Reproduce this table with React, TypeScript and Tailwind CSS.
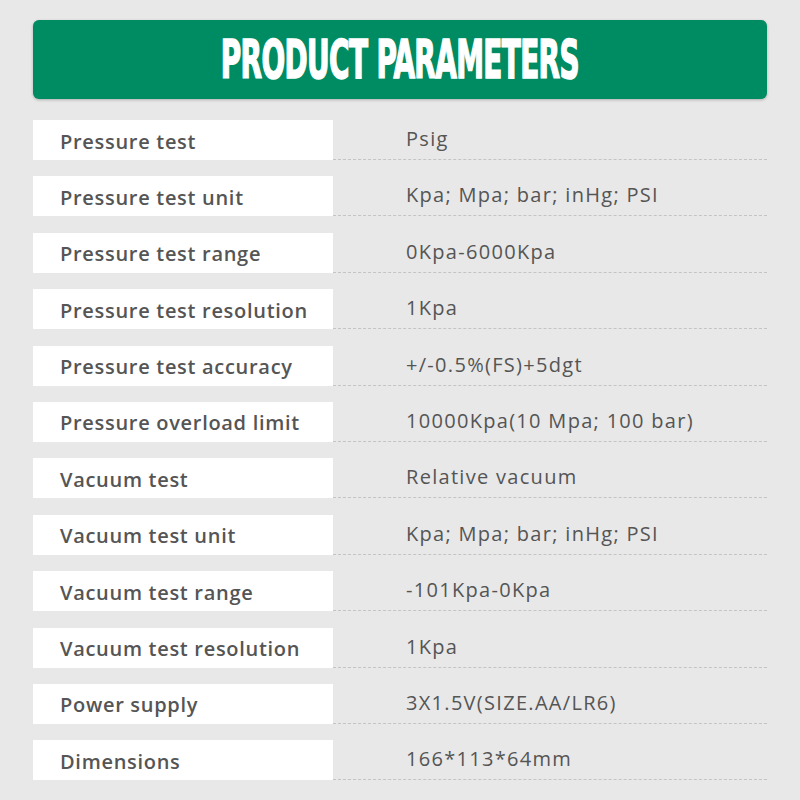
const rows: [string, string][] = [
  ['Pressure test', 'Psig'],
  ['Pressure test unit', 'Kpa; Mpa; bar; inHg; PSI'],
  ['Pressure test range', '0Kpa-6000Kpa'],
  ['Pressure test resolution', '1Kpa'],
  ['Pressure test accuracy', '+/-0.5%(FS)+5dgt'],
  ['Pressure overload limit', '10000Kpa(10 Mpa; 100 bar)'],
  ['Vacuum test', 'Relative vacuum'],
  ['Vacuum test unit', 'Kpa; Mpa; bar; inHg; PSI'],
  ['Vacuum test range', '-101Kpa-0Kpa'],
  ['Vacuum test resolution', '1Kpa'],
  ['Power supply', '3X1.5V(SIZE.AA/LR6)'],
  ['Dimensions', '166*113*64mm'],
]

export default function App() {
  return (
    <div className="w-[800px] h-[800px] bg-[#e8e8e8] pt-5 px-[33px] font-['Open_Sans',sans-serif] text-[#555]">
      {/* Header */}
      <div className="h-[79px] rounded-md bg-[#008c62] shadow-[0_1px_3px_rgba(0,0,0,0.25)] flex items-center justify-center">
        <h1 className="font-['DejaVu_Sans_Condensed',sans-serif] font-bold text-white text-[50px] leading-none tracking-[-1px] scale-x-[0.62] scale-y-[1.05] whitespace-nowrap [-webkit-text-stroke:1.5px_white]">
          PRODUCT PARAMETERS
        </h1>
      </div>

      {/* Parameter rows */}
      <div className="mt-[21px] flex flex-col gap-[16.4px]">
        {rows.map(([label, value]) => (
          <div key={label} className="flex h-10">
            <div className="w-[300px] bg-white flex items-center pl-[27px] pt-[3px] text-[20px] font-semibold tracking-[0.7px] whitespace-nowrap">
              {label}
            </div>
            <div className="flex-1 border-b border-dashed border-[#c4c4c4] flex items-center pl-[73px] pb-[1px] text-[20px] tracking-[1.3px] whitespace-nowrap">
              {value}
            </div>
          </div>
        ))}
      </div>
    </div>
  )
}
